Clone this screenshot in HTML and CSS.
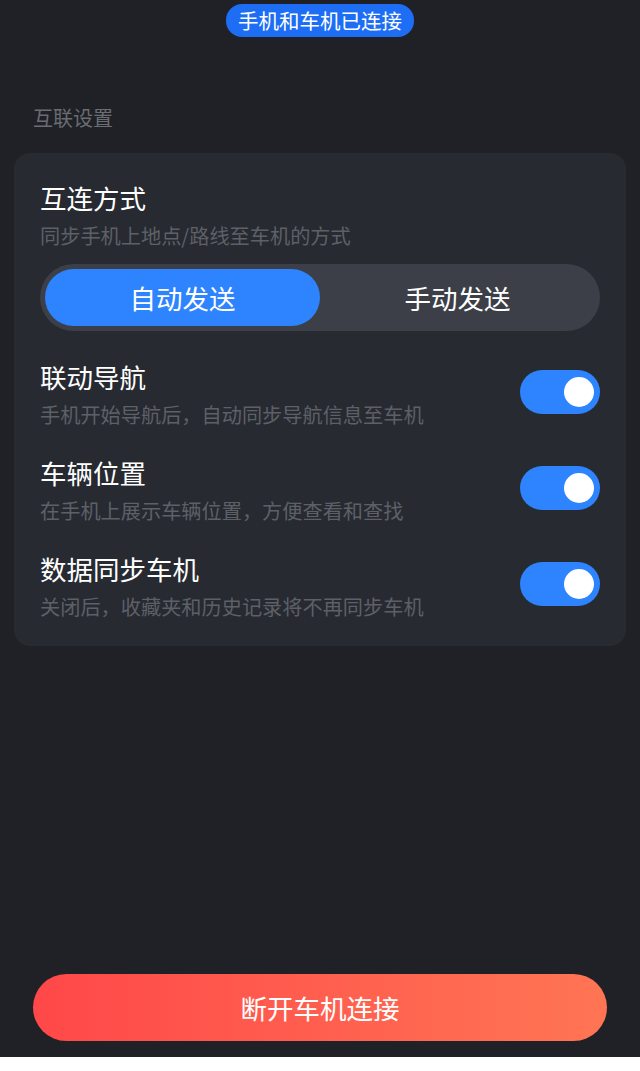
FILE: index.html
```html
<!DOCTYPE html>
<html lang="zh-CN">
<head>
    <meta charset="UTF-8">
    <meta name="viewport" content="width=device-width, initial-scale=1.0">
    <title>互联设置</title>
    <link rel="stylesheet" href="styles.css">
</head>
<body>

    <div class="screen">

        <!-- Connection toast -->
        <div class="toast">手机和车机已连接</div>

        <div class="section-label">互联设置</div>

        <!-- Settings card -->
        <div class="card">
            <div class="item-title">互连方式</div>
            <div class="item-desc">同步手机上地点/路线至车机的方式</div>

            <div class="segment">
                <div class="segment-option active">自动发送</div>
                <div class="segment-option">手动发送</div>
            </div>

            <div class="setting-row first">
                <div class="setting-text">
                    <div class="item-title">联动导航</div>
                    <div class="item-desc">手机开始导航后，自动同步导航信息至车机</div>
                </div>
                <div class="switch on"><span class="knob"></span></div>
            </div>

            <div class="setting-row">
                <div class="setting-text">
                    <div class="item-title">车辆位置</div>
                    <div class="item-desc">在手机上展示车辆位置，方便查看和查找</div>
                </div>
                <div class="switch on"><span class="knob"></span></div>
            </div>

            <div class="setting-row">
                <div class="setting-text">
                    <div class="item-title">数据同步车机</div>
                    <div class="item-desc">关闭后，收藏夹和历史记录将不再同步车机</div>
                </div>
                <div class="switch on"><span class="knob"></span></div>
            </div>
        </div>

        <button class="disconnect-btn">断开车机连接</button>
    </div>

</body>
</html>
```

FILE: styles.css
```css
/* General Styles */
body {
    margin: 0;
    padding: 0;
    background: #ffffff;
    font-family: "Noto Sans CJK SC", "Noto Sans", sans-serif;
    color: #ffffff;
}

.screen {
    height: 1057px;
    background: #1f2126;
    display: flex;
    flex-direction: column;
    align-items: center;
}

/* Top toast */
.toast {
    margin-top: 4px;
    height: 33px;
    line-height: 33px;
    padding: 0 12px;
    font-size: 20.5px;
    background: #1d6ef5;
    border-radius: 16px;
}

.section-label {
    align-self: stretch;
    margin: 71px 0 0 33px;
    font-size: 20px;
    line-height: 20px;
    color: #6a6d73;
}

/* Card */
.card {
    align-self: stretch;
    margin: 25px 14px 0;
    padding: 32px 26px 29px;
    background: #272a31;
    border-radius: 16px;
}

.item-title {
    font-size: 26.5px;
    line-height: 26px;
    color: #ffffff;
}

.item-desc {
    margin-top: 15px;
    font-size: 20.2px;
    line-height: 20px;
    color: #5d6067;
}

/* Segmented control */
.segment {
    margin-top: 18px;
    height: 67px;
    padding: 5px;
    box-sizing: border-box;
    background: #3c3f47;
    border-radius: 34px;
    display: grid;
    grid-template-columns: 1fr 1fr;
}

.segment-option {
    display: flex;
    align-items: center;
    justify-content: center;
    font-size: 26.5px;
    border-radius: 29px;
    color: #ffffff;
}

.segment-option.active {
    background: #2e83fe;
}

/* Toggle rows */
.setting-row {
    display: flex;
    align-items: center;
    justify-content: space-between;
    margin-top: 35px;
}

.setting-row.first {
    margin-top: 33px;
}

.switch {
    width: 80px;
    height: 44px;
    border-radius: 22px;
    background: #3c3f47;
    display: flex;
    align-items: center;
    padding: 0 6px;
    box-sizing: border-box;
    margin-top: -5px;
}

.switch.on {
    background: #2e83fe;
    justify-content: flex-end;
}

.knob {
    width: 30px;
    height: 30px;
    border-radius: 50%;
    background: #ffffff;
}

/* Bottom button */
.disconnect-btn {
    margin-top: auto;
    margin-bottom: 16px;
    width: 574px;
    height: 67px;
    border: none;
    border-radius: 34px;
    background: linear-gradient(90deg, #ff4849, #ff7554);
    color: #ffffff;
    font-family: "Noto Sans CJK SC", "Noto Sans", sans-serif;
    font-size: 26.5px;
    cursor: pointer;
}
```
